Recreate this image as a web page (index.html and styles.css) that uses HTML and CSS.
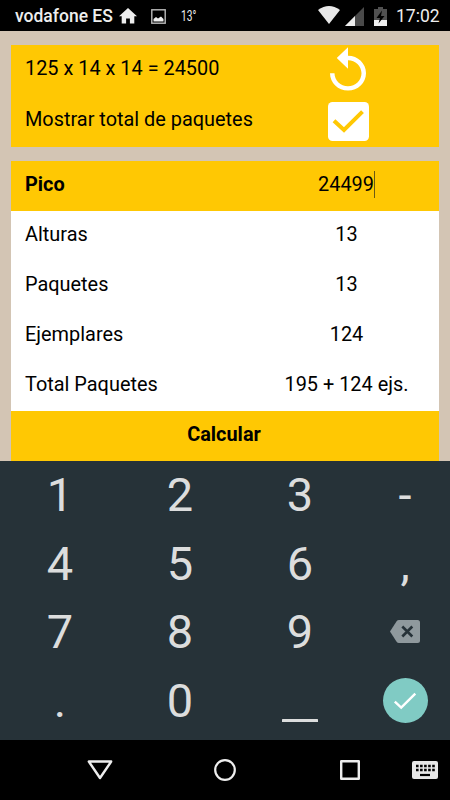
FILE: index.html
```html
<!DOCTYPE html>
<html lang="es">
<head>
    <meta charset="UTF-8">
    <meta name="viewport" content="width=device-width, initial-scale=1.0">
    <title>Paquetes</title>
    <link rel="stylesheet" href="styles.css">
</head>
<body>
    <div class="status-bar">
        <span class="carrier">vodafone ES</span>
        <svg class="home-icon" width="18" height="16" viewBox="0 0 18 16"><path d="M9 0l9 8.2h-2.7V15.500h-4.400v-5H7.100v5H2.700V8.200H0z" fill="#eee"/></svg>
        <svg class="picture-icon" width="15" height="15" viewBox="0 0 15 15"><rect x=".8" y=".8" width="13.400" height="13.400" fill="none" stroke="#bbb" stroke-width="1.400"/><path d="M2.500 12.500V10L5 8l2 1.500L10 7.500l2.500 2.500v2.500z" fill="#eee"/></svg>
        <span class="temp">13°</span>
        <span class="spacer"></span>
        <svg class="wifi-icon" width="22" height="18" viewBox="0 0 22 18"><path d="M0 4Q11-4 22 4L11 18z" fill="#e8e8e8"/></svg>
        <svg class="signal-icon" width="19" height="19" viewBox="0 0 19 19"><path d="M19 0v19H0z" fill="#4a4a4a"/><path d="M10 9v10H0z" fill="#eee"/></svg>
        <svg class="battery-icon" width="13" height="19" viewBox="0 0 13 19"><path d="M0 2h4V0h5v2h4v17H0z" fill="#515151"/><path d="M0 13h13v6H0z" fill="#eee"/><path d="M8 3.500L2.500 11H6l-1.500 5.500L10.500 9H7z" fill="#000"/></svg>
        <span class="clock">17:02</span>
    </div>

    <div class="content">
        <div class="card header-card">
            <div class="header-row">
                <span>125 x 14 x 14 = 24500</span>
                <svg class="replay-icon" width="54" height="52" viewBox="0 0 24 24" preserveAspectRatio="none"><path d="M12 5V1L7 6l5 5V7c3.310 0 6 2.690 6 6s-2.690 6-6 6-6-2.690-6-6H4c0 4.420 3.580 8 8 8s8-3.580 8-8-3.580-8-8-8z" fill="#fff"/></svg>
            </div>
            <div class="header-row">
                <span>Mostrar total de paquetes</span>
                <svg class="check-icon" width="41" height="39" viewBox="0 0 41 39"><rect width="41" height="39" rx="4.500" fill="#fff"/><path d="M6 18.700L16 28 34.500 9.700" fill="none" stroke="#ffc803" stroke-width="4"/></svg>
            </div>
        </div>

        <div class="card">
            <div class="row pico">
                <span class="label">Pico</span>
                <span class="value"><span class="input">24499</span></span>
            </div>
            <div class="row">
                <span class="label">Alturas</span>
                <span class="value">13</span>
            </div>
            <div class="row">
                <span class="label">Paquetes</span>
                <span class="value">13</span>
            </div>
            <div class="row">
                <span class="label">Ejemplares</span>
                <span class="value">124</span>
            </div>
            <div class="row">
                <span class="label">Total Paquetes</span>
                <span class="value">195 + 124 ejs.</span>
            </div>
            <div class="calcular">Calcular</div>
        </div>
    </div>

    <div class="keypad">
        <div class="key">1</div>
        <div class="key">2</div>
        <div class="key">3</div>
        <div class="key">-</div>
        <div class="key">4</div>
        <div class="key">5</div>
        <div class="key">6</div>
        <div class="key">,</div>
        <div class="key">7</div>
        <div class="key">8</div>
        <div class="key">9</div>
        <div class="key"><svg width="30" height="23" viewBox="0 0 30 23"><path d="M9 0h18.500Q30 0 30 2.500v18Q30 23 27.500 23H9Q7.500 23 6.600 21.800L0 11.500 6.600 1.200Q7.500 0 9 0z" fill="#8f999d"/><path d="M12.300 6.500l10 10M22.300 6.500l-10 10" stroke="#263238" stroke-width="2.600"/></svg></div>
        <div class="key">.</div>
        <div class="key">0</div>
        <div class="key"><svg class="space-icon" width="36" height="3" viewBox="0 0 36 3"><rect width="36" height="3" rx=".5" fill="#dcdddd"/></svg></div>
        <div class="key"><span class="enter"><svg width="24" height="18" viewBox="0 0 24 18"><path d="M1.800 9.600l6.400 6L22.300 1.700" fill="none" stroke="#fff" stroke-width="2.400"/></svg></span></div>
    </div>

    <div class="nav-bar">
        <svg class="nav-back" width="26" height="20" viewBox="0 0 26 20"><path d="M1.800 1.500h22.400L13 18z" fill="none" stroke="#eee" stroke-width="2.400" stroke-linejoin="round"/></svg>
        <svg class="nav-home" width="22" height="22" viewBox="0 0 22 22"><circle cx="11" cy="11" r="9.800" fill="none" stroke="#eee" stroke-width="2.200"/></svg>
        <svg class="nav-recent" width="20" height="20" viewBox="0 0 20 20"><rect x="1.200" y="1.200" width="17.600" height="17.600" fill="none" stroke="#eee" stroke-width="2.400" stroke-linejoin="round"/></svg>
        <svg class="nav-keyboard" width="26" height="18" viewBox="0 0 26 18"><rect width="26" height="18" rx="2" fill="#e6e6e6"/><path d="M4 5h19M4 9h19" stroke="#000" stroke-width="2.300" stroke-dasharray="2.600 1.450"/><path d="M8 14h10" stroke="#000" stroke-width="2.200"/></svg>
    </div>
</body>
</html>
```

FILE: styles.css
```css
* {
    box-sizing: border-box;
}
body {
    margin: 0;
    width: 450px;
    height: 800px;
    display: flex;
    flex-direction: column;
    overflow: hidden;
    font-family: Roboto, "Liberation Sans", sans-serif;
    font-size: 19.9px;
    color: #000;
    background-color: #d3c5b4;
}
svg {
    display: block;
    flex: none;
}
.status-bar {
    height: 31px;
    flex: none;
    display: flex;
    align-items: center;
    padding: 1px 9px 0 15px;
    background-color: #000;
    color: #eee;
    white-space: nowrap;
}
.carrier {
    width: 104px;
    font-size: 17.500px;
    font-weight: 500;
}
.picture-icon {
    margin-left: 14px;
}
.temp {
    margin-left: 15px;
    font-size: 15px;
    transform: scaleX(0.68);
    transform-origin: left;
}
.spacer {
    flex: 1;
}
.wifi-icon {
    position: relative;
    top: -1px;
}
.signal-icon {
    margin-left: 5px;
}
.battery-icon {
    margin-left: 10px;
}
.clock {
    margin-left: 9px;
    width: 45px;
    font-size: 17.500px;
}
.content {
    height: 430px;
    flex: none;
    padding: 14px 11px 0;
}
.card {
    background-color: #fff;
}
.header-card {
    height: 102px;
    margin-bottom: 14px;
    background-color: #ffc803;
}
.header-row {
    height: 51px;
    display: flex;
    justify-content: space-between;
    padding-left: 14px;
    line-height: 48px;
}
.replay-icon {
    margin-right: 64px;
}
.check-icon {
    margin: 6px 70px 0 0;
}
.row {
    height: 50px;
    display: flex;
    padding-left: 14px;
    line-height: 48px;
}
.label {
    width: 229px;
}
.value {
    width: 185px;
    text-align: center;
}
.pico {
    background-color: #ffc803;
}
.pico .label {
    font-weight: 700;
}
.input {
    display: inline-block;
    height: 27px;
    line-height: 27px;
    border-right: 1px solid #6b5a15;
}
.calcular {
    height: 50px;
    line-height: 48px;
    padding-right: 2px;
    text-align: center;
    font-weight: 700;
    background-color: #ffc803;
}
.keypad {
    height: 279px;
    flex: none;
    display: grid;
    grid-template-columns: 120px 120px 120px 90px;
    grid-template-rows: repeat(4, 68.8px);
    background-color: #263238;
    color: #dcdddd;
    font-size: 47px;
}
.key {
    display: flex;
    align-items: center;
    justify-content: center;
    padding-bottom: 2px;
}
.space-icon {
    margin-top: 40px;
}
.enter {
    width: 45px;
    height: 45px;
    display: flex;
    align-items: center;
    justify-content: center;
    border-radius: 50%;
    background-color: #80cbc4;
}
.nav-bar {
    flex: 1;
    display: flex;
    align-items: center;
    padding-left: 87px;
    background-color: #000;
}
.nav-home {
    margin-left: 101px;
}
.nav-recent {
    margin-left: 104px;
}
.nav-keyboard {
    margin-left: 52px;
}
```
